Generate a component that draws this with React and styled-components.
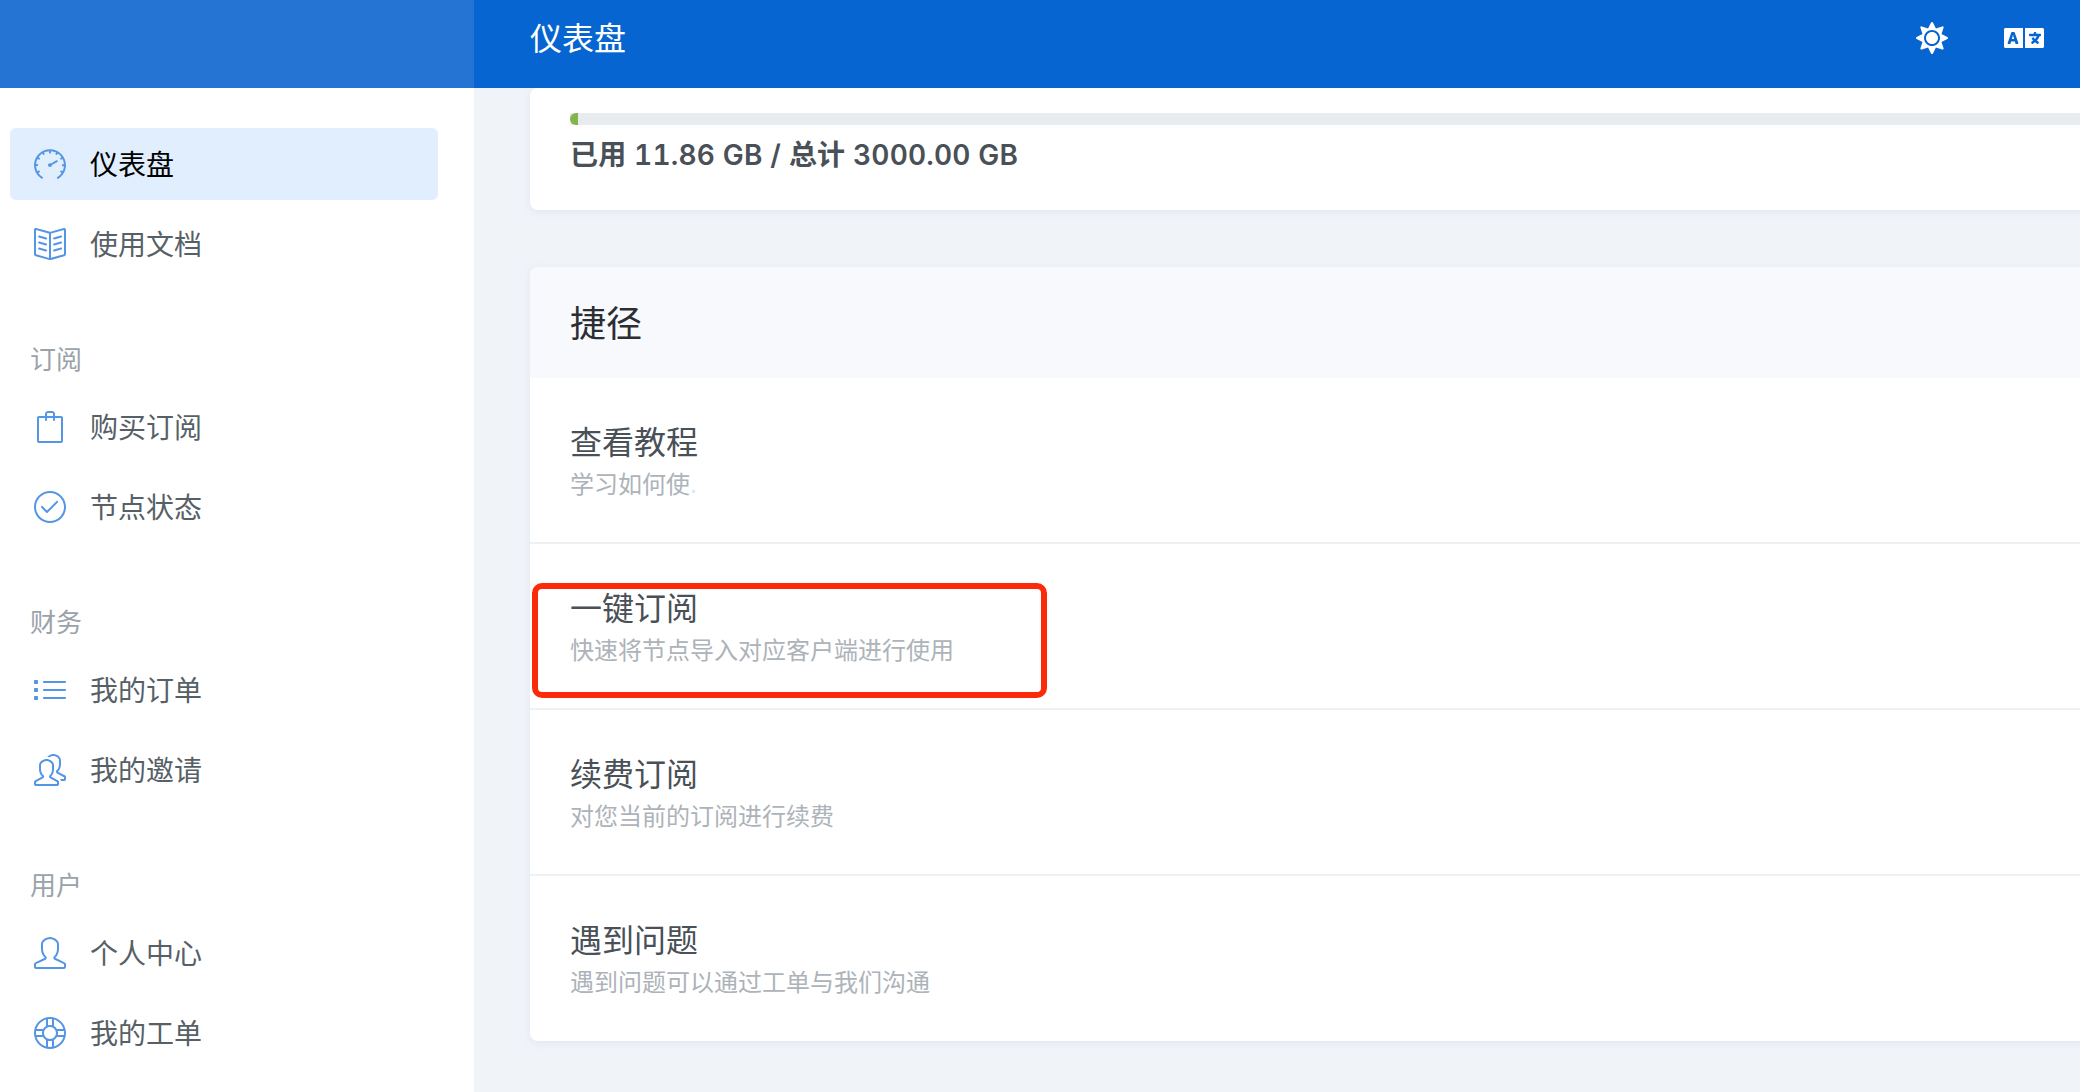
import React from "react";
import styled, { createGlobalStyle } from "styled-components";
import { SlSpeedometer, SlBookOpen, SlBag, SlCheck, SlList, SlPeople, SlUser, SlSupport } from "react-icons/sl";
import { FaSun, FaLanguage } from "react-icons/fa";

const Global = createGlobalStyle`
  html, body { margin: 0; padding: 0; height: 100%; overflow: hidden; background: #f0f3f8; }
  body { font-family: Inter, "Noto Sans CJK SC", sans-serif; }
  * { box-sizing: border-box; }
`;

const Shell = styled.div`
  display: grid;
  grid-template-columns: 474px 1fr;
  height: 100vh;
  overflow: hidden;
`;
const Sidebar = styled.aside`
  background: #fff;
  display: flex;
  flex-direction: column;
`;
const Brand = styled.div`
  height: 88px;
  flex: none;
  background: #2574d4;
`;
const Nav = styled.nav`
  padding: 40px 36px 0 10px;
  display: flex;
  flex-direction: column;
`;
const Item = styled.a`
  height: 72px;
  margin-bottom: 8px;
  padding-left: 24px;
  display: flex;
  align-items: center;
  gap: 24px;
  border-radius: 6px;
  font-size: 28px;
  color: ${(p) => (p.$active ? "#000" : "#575f67")};
  background: ${(p) => (p.$active ? "#e1eefe" : "transparent")};
  svg { width: 32px; height: 32px; color: #5495e6; flex: none; }
`;
const ItemText = styled.span`
  padding-bottom: 2px;
`;
const Label = styled.div`
  height: 47px;
  margin: 48px 0 8px;
  padding-left: 20px;
  font-size: 26px;
  line-height: 47px;
  color: #9aa2aa;
`;
const Content = styled.div`
  display: flex;
  flex-direction: column;
  min-width: 0;
`;
const Header = styled.header`
  height: 88px;
  flex: none;
  background: #0665d0;
  padding: 0 36px 12px 56px;
  display: flex;
  align-items: center;
  justify-content: space-between;
  color: #fff;
`;
const Title = styled.h1`
  margin: 0;
  padding-bottom: 4px;
  font-size: 32px;
  font-weight: 400;
`;
const Actions = styled.div`
  display: flex;
  align-items: center;
  gap: 56px;
  color: #fff;
`;
const Main = styled.main`
  flex: 1;
  padding-left: 56px;
  overflow: hidden;
`;
const Card = styled.section`
  margin-right: -20px;
  margin-bottom: 57px;
  background: #fff;
  border-radius: 8px;
  box-shadow: 0 2px 6px rgba(215, 222, 234, 0.55);
  overflow: hidden;
`;
const TrafficBody = styled.div`
  height: 122px;
  padding: 25px 0 0 40px;
`;
const Bar = styled.div`
  height: 12px;
  background: #e9ecef;
  overflow: hidden;
`;
const BarFill = styled.div`
  height: 100%;
  background: #82b54b;
  border-radius: 6px 0 0 6px;
`;
const Usage = styled.div`
  margin-top: 12px;
  font-size: 28px;
  line-height: 36px;
  font-weight: 600;
  font-variant-numeric: tabular-nums;
  letter-spacing: 0.2px;
  color: #495057;
`;
const CardHead = styled.div`
  height: 111px;
  padding: 0 40px 4px;
  display: flex;
  align-items: center;
  background: #f8f9fc;
  font-size: 36px;
  color: #2b2f33;
`;
const Row = styled.div`
  position: relative;
  height: 166px;
  padding: 40px 40px 0;
  border-bottom: 2px solid #eff0f2;
  &:last-child { border-bottom: none; height: 165px; }
`;
const RowTitle = styled.div`
  font-size: 32px;
  line-height: 49px;
  color: #495057;
`;
const RowSub = styled.div`
  font-size: 24px;
  line-height: 36px;
  color: #adb3b9;
`;
const Faint = styled.span`
  color: #e3e5e8;
`;
const Callout = styled.div`
  position: absolute;
  left: 2px;
  top: 39px;
  width: 515px;
  height: 115px;
  border: 6px solid #fb2a08;
  border-radius: 10px;
  pointer-events: none;
`;

const groups = [
  { items: [["仪表盘", SlSpeedometer, true], ["使用文档", SlBookOpen]] },
  { label: "订阅", items: [["购买订阅", SlBag], ["节点状态", SlCheck]] },
  { label: "财务", items: [["我的订单", SlList], ["我的邀请", SlPeople]] },
  { label: "用户", items: [["个人中心", SlUser], ["我的工单", SlSupport]] },
];

const rows = [
  ["查看教程", <>学习如何使<Faint>.</Faint></>],
  ["一键订阅", "快速将节点导入对应客户端进行使用", true],
  ["续费订阅", "对您当前的订阅进行续费"],
  ["遇到问题", "遇到问题可以通过工单与我们沟通"],
];

export default function App() {
  return (
    <Shell>
      <Global />
      <Sidebar>
        <Brand />
        <Nav>
          {groups.map((g, i) => (
            <React.Fragment key={i}>
              {g.label && <Label>{g.label}</Label>}
              {g.items.map(([text, Icon, active]) => (
                <Item key={text} $active={active}>
                  <Icon />
                  <ItemText>{text}</ItemText>
                </Item>
              ))}
            </React.Fragment>
          ))}
        </Nav>
      </Sidebar>
      <Content>
        <Header>
          <Title>仪表盘</Title>
          <Actions>
            <FaSun size={32} />
            <FaLanguage size={40} />
          </Actions>
        </Header>
        <Main>
          <Card>
            <TrafficBody>
              <Bar>
                <BarFill style={{ width: `${(8 / 1560) * 100}%` }} />
              </Bar>
              <Usage>已用 11.86 GB / 总计 3000.00 GB</Usage>
            </TrafficBody>
          </Card>
          <Card>
            <CardHead>捷径</CardHead>
            {rows.map(([t, s, marked]) => (
              <Row key={t}>
                <RowTitle>{t}</RowTitle>
                <RowSub>{s}</RowSub>
                {marked && <Callout />}
              </Row>
            ))}
          </Card>
        </Main>
      </Content>
    </Shell>
  );
}
